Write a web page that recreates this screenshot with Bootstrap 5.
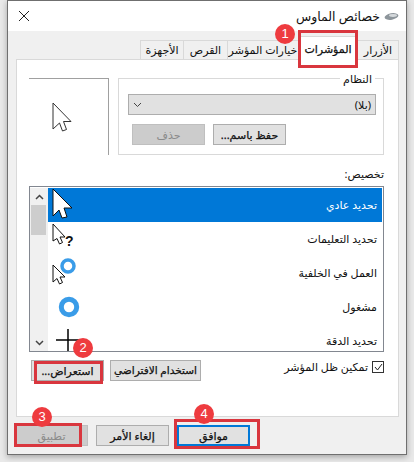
<!DOCTYPE html>
<html lang="ar" dir="rtl">
<head>
    <meta charset="UTF-8">
    <meta name="viewport" content="width=device-width, initial-scale=1.0">
    <title>خصائص الماوس</title>
    <link href="https://cdn.jsdelivr.net/npm/bootstrap@5.3.3/dist/css/bootstrap.min.css" rel="stylesheet">
    <style>
        html, body {
            height: 462px;
            overflow: hidden;
        }
        body {
            background: #e9e9e9;
            font-family: "Noto Sans", "DejaVu Sans", "Liberation Sans", sans-serif;
            font-size: 11px;
            color: #111;
            line-height: 1.2;
        }
        .dlg {
            position: relative;
            width: 400px;
            height: 455px;
            margin-left: 7px;
            margin-right: 7px;
            background: #f0f0f0;
            border: 1px solid #6f6f6f;
            box-shadow: 0 2px 6px rgba(0, 0, 0, .3);
        }
        .titlebar {
            height: 30px;
            background: #fff;
            padding: 0 7px 0 10px;
        }
        .ttl { font-size: 12.5px; }
        .tabrow {
            height: 28px;
            padding: 9px 7px 0 0;
        }
        .tabx {
            height: 19px;
            background: #f0f0f0;
            border: 1px solid #d9d9d9;
            border-bottom: 0;
            margin-left: -1px;
            white-space: nowrap;
        }
        .tabx.on {
            height: 24px;
            margin-top: -4px;
            background: #fff;
            position: relative;
            z-index: 1;
            -webkit-text-stroke: .25px #111;
        }
        .tw-a { width: 42px; }
        .tw-b { width: 60px; }
        .tw-c { width: 72px; }
        .tw-d { width: 45px; }
        .tw-e { width: 44px; }
        .sheet {
            height: 358px;
            margin: 0 7px 0 8px;
            background: #fff;
            border: 1px solid #d9d9d9;
            padding: 18px 14px 0 12px;
        }
        .toprow { gap: 9px; height: 77px; }
        .schemebox {
            position: relative;
            width: 266px;
            height: 77px;
            border: 1px solid #d9d9d9;
            padding: 15px 7px 0 9px;
        }
        .legendx {
            position: absolute;
            top: -7px;
            right: 8px;
            background: #fff;
            padding: 0 3px;
        }
        .pick {
            height: 21px;
            background: #e1e1e1;
            border: 1px solid #adadad;
            padding: 0 4px;
        }
        .winbtn {
            width: 73px;
            height: 21px;
            background: #e1e1e1;
            border: 1px solid #adadad;
            border-radius: 0;
            padding: 0;
            font-size: 11px;
            line-height: 1;
            color: #111;
            white-space: nowrap;
            -webkit-text-stroke: .25px #111;
        }
        .winbtn.off {
            background: #ccc;
            border-color: #bfbfbf;
            color: #8a8a8a;
            -webkit-text-stroke: 0;
        }
        .winbtn.wide { width: 91px; font-size: 10.5px; }
        .winbtn.dflt { border: 2px solid #0078d7; }
        .preview {
            width: 80px;
            height: 77px;
            border-top: 1px solid #a0a0a0;
            border-right: 1px solid #a0a0a0;
            padding-right: 14px;
        }
        .caplabel { margin: 12px 0 6px; height: 13px; }
        .curlist {
            height: 166px;
            border: 1px solid #828790;
            padding: 1px 1px 0 0;
            overflow: hidden;
        }
        .curitem {
            height: 34px;
            padding-right: 5px;
        }
        .curitem.sel { background: #0078d7; color: #fff; }
        .curitem svg { overflow: visible; display: block; }
        .scrollcol {
            width: 18px;
            background: #f0f0f0;
            padding-left: 1px;
        }
        .thumbx { height: 30px; background: #cdcdcd; margin-right: 2px; }
        .arrowx { height: 17px; }
        .optrow { margin-top: 8px; height: 21px; padding-left: 2px; }
        .optleft { gap: 6px; }
        .chk {
            width: 12px;
            height: 12px;
            margin-top: -7px;
            background: #fff;
            border: 1px solid #333;
        }
        .chktext { margin-top: -7px; }
        .redbox {
            position: absolute;
            border: 3px solid #d9363e;
            z-index: 4;
        }
        .dot {
            position: absolute;
            width: 20px;
            height: 20px;
            border-radius: 50%;
            background: #ee3b3f;
            color: #fff;
            font: 13px/20px "Liberation Sans", sans-serif;
            text-align: center;
            z-index: 5;
        }
        .btnrow {
            gap: 8px;
            padding: 8px 0 0 7px;
        }
    </style>
</head>
<body>
    <div class="dlg">
        <div class="titlebar d-flex align-items-center justify-content-between">
            <div class="d-flex align-items-center gap-1">
                <svg width="15" height="9" viewBox="0 0 15 9"><ellipse cx="7.5" cy="4.5" rx="7" ry="3.2" fill="#8d959b" transform="rotate(-10 7.5 4.5)"/><ellipse cx="9" cy="3.5" rx="4" ry="1.4" fill="#d5d9dc"/></svg>
                <span class="ttl">خصائص الماوس</span>
            </div>
            <svg width="12" height="12" viewBox="0 0 12 12"><path d="M1 1l10 10M11 1L1 11" stroke="#222" stroke-width="1"/></svg>
        </div>

        <div class="tabrow d-flex">
            <div class="tabx tw-a d-flex align-items-center justify-content-center">الأزرار</div>
            <div class="tabx tw-b on d-flex align-items-center justify-content-center">المؤشرات</div>
            <div class="tabx tw-c d-flex align-items-center justify-content-center">خيارات المؤشر</div>
            <div class="tabx tw-d d-flex align-items-center justify-content-center">القرص</div>
            <div class="tabx tw-e d-flex align-items-center justify-content-center">الأجهزة</div>
        </div>

        <div class="sheet">
            <div class="toprow d-flex">
                <div class="schemebox">
                    <div class="legendx">النظام</div>
                    <div class="pick d-flex align-items-center justify-content-between">
                        <span>(بلا)</span>
                        <svg width="9" height="6" viewBox="0 0 9 6"><path d="M1 1l3.500 3.500L8 1" fill="none" stroke="#444"/></svg>
                    </div>
                    <div class="d-flex justify-content-end gap-2 ps-1" style="margin-top:9px">
                        <button type="button" class="winbtn">حفظ باسم...</button>
                        <button type="button" class="winbtn off">حذف</button>
                    </div>
                </div>
                <div class="preview d-flex align-items-center justify-content-center">
                    <svg width="20" height="30" viewBox="0 0 20 30"><path d="M1 1L19 19.500H11.500L14.500 27.500L10.500 29L7.500 21L1 27Z" fill="#fff" stroke="#333"/></svg>
                </div>
            </div>

            <div class="caplabel">تخصيص:</div>

            <div class="curlist d-flex">
                <div class="flex-grow-1 overflow-hidden">
                    <div class="curitem sel d-flex align-items-center justify-content-between">
                        <span>تحديد عادي</span>
                        <svg width="34" height="34" viewBox="0 0 34 34"><path d="M5 1L24 20H16L19 29L14 30L11 22L5 28Z" fill="#fff" stroke="#111"/></svg>
                    </div>
                    <div class="curitem d-flex align-items-center justify-content-between">
                        <span>تحديد التعليمات</span>
                        <svg width="34" height="34" viewBox="0 0 34 34"><path d="M5 2L17 15H12L14.500 20.500L11.500 22L9 16.500L5 19Z" fill="#fff" stroke="#111"/><text x="17" y="24" direction="ltr" font-size="14" font-weight="700" font-family="Liberation Sans" fill="#111">?</text></svg>
                    </div>
                    <div class="curitem d-flex align-items-center justify-content-between">
                        <span>العمل في الخلفية</span>
                        <svg width="34" height="34" viewBox="0 0 34 34"><circle cx="20" cy="10" r="6" fill="#fff" stroke="#3a9ce8" stroke-width="3.500"/><path d="M5 9L17 21H12L14.500 26.500L11.500 28L9 22.500L5 26Z" fill="#fff" stroke="#111"/></svg>
                    </div>
                    <div class="curitem d-flex align-items-center justify-content-between">
                        <span>مشغول</span>
                        <svg width="34" height="34" viewBox="0 0 34 34"><circle cx="21" cy="17" r="7.700" fill="#fff" stroke="#3a9ce8" stroke-width="5"/></svg>
                    </div>
                    <div class="curitem d-flex align-items-center justify-content-between">
                        <span>تحديد الدقة</span>
                        <svg width="34" height="34" viewBox="0 0 34 34"><path d="M20 5V27M8 16H32" stroke="#000" stroke-width="1.500"/></svg>
                    </div>
                </div>
                <div class="scrollcol d-flex flex-column">
                    <div class="arrowx d-flex align-items-center justify-content-center">
                        <svg width="9" height="6" viewBox="0 0 9 6"><path d="M1 5l3.500-3.500L8 5" fill="none" stroke="#444" stroke-width="1.500"/></svg>
                    </div>
                    <div class="thumbx"></div>
                    <div class="flex-grow-1"></div>
                    <div class="arrowx d-flex align-items-center justify-content-center">
                        <svg width="9" height="6" viewBox="0 0 9 6"><path d="M1 1l3.500 3.500L8 1" fill="none" stroke="#444" stroke-width="1.500"/></svg>
                    </div>
                </div>
            </div>

            <div class="optrow d-flex align-items-center justify-content-between">
                <div class="d-flex align-items-center gap-1">
                    <span class="chk d-flex align-items-center justify-content-center">
                        <svg width="9" height="8" viewBox="0 0 9 8"><path d="M1 4l2.500 3L8 1" fill="none" stroke="#222"/></svg>
                    </span>
                    <span class="chktext">تمكين ظل المؤشر</span>
                </div>
                <div class="optleft d-flex">
                    <button type="button" class="winbtn wide">استخدام الافتراضي</button>
                    <button type="button" class="winbtn">استعراض...</button>
                </div>
            </div>
        </div>

        <div class="btnrow d-flex justify-content-end">
            <button type="button" class="winbtn dflt">موافق</button>
            <button type="button" class="winbtn">إلغاء الأمر</button>
            <button type="button" class="winbtn off">تطبيق</button>
        </div>
    </div>

    <div class="redbox" style="left:298px;top:30px;width:60px;height:38px"></div>
    <div class="redbox" style="left:34px;top:361px;width:69px;height:23px"></div>
    <div class="redbox" style="left:14px;top:423px;width:68px;height:24px"></div>
    <div class="redbox" style="left:174px;top:419px;width:86px;height:30px"></div>
    <div class="dot" style="left:275px;top:24px">1</div>
    <div class="dot" style="left:73px;top:338px">2</div>
    <div class="dot" style="left:32px;top:407px">3</div>
    <div class="dot" style="left:194px;top:404px">4</div>

    <script src="https://cdn.jsdelivr.net/npm/bootstrap@5.3.3/dist/js/bootstrap.bundle.min.js"></script>
</body>
</html>
